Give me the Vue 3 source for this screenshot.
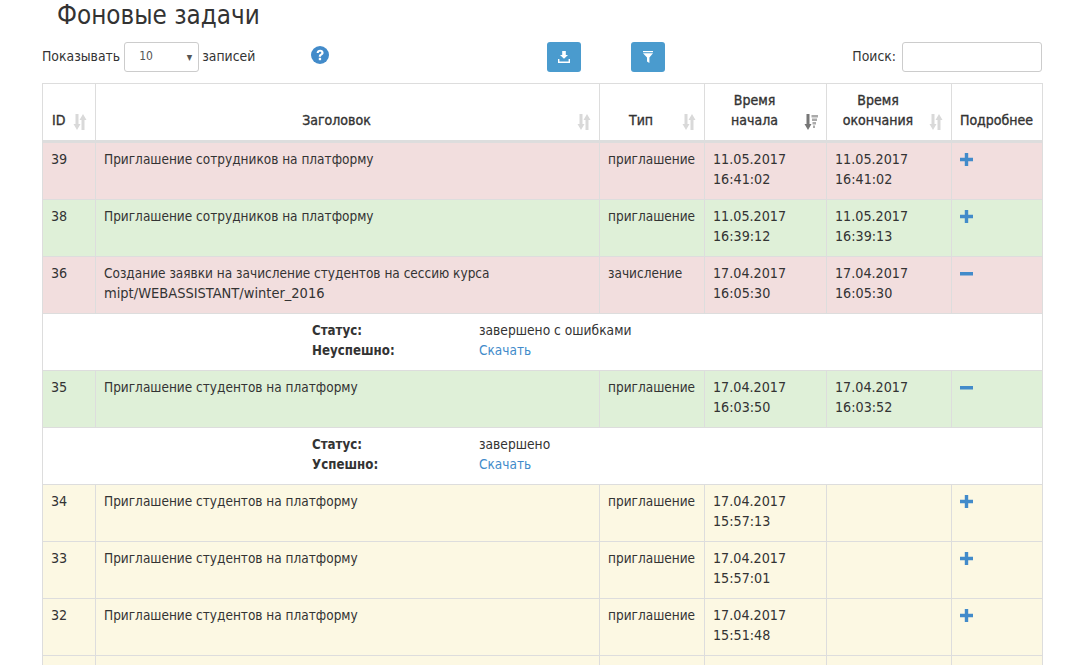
<template>
  <div class="page">
    <h1 class="page-title">Фоновые задачи</h1>

    <div class="toolbar">
      <div class="length-wrap">
        <span class="tool-text">Показывать</span>
        <div class="length-select">
          <span class="tool-text">10</span>
          <span class="caret">▾</span>
        </div>
        <span class="tool-text">записей</span>
      </div>
      <svg class="help-icon" viewBox="0 0 18 18" width="18" height="18">
        <circle cx="9" cy="9" r="9" fill="#428bca" />
        <path d="M5.600 6.900C5.800 4.900 7.200 3.800 9.200 3.800c2 0 3.400 1.200 3.400 2.900 0 1.300-.7 2-1.600 2.600-.8.500-1 .8-1 1.500H7.800c0-1.300.3-2 1.300-2.700.7-.5 1.200-.8 1.200-1.400 0-.6-.5-1-1.200-1-.8 0-1.200.4-1.400 1.200z" fill="#fff" />
        <rect x="7.800" y="11.800" width="2.300" height="2.400" fill="#fff" />
      </svg>
      <button class="tool-btn btn-download">
        <svg viewBox="0 0 12 12" width="12" height="12">
          <path d="M4.200 0h3.600v4H10L6 7.800 2 4h2.200z" fill="#fff" />
          <path d="M0 8h1.400v2.400h9.200V8H12v4H0z" fill="#fff" />
        </svg>
      </button>
      <button class="tool-btn btn-filter">
        <svg viewBox="0 0 12 12" width="12" height="12">
          <rect x="1" y="0" width="10" height="1.200" fill="#fff" />
          <path d="M1 2.200h10L7.400 6.400V12L5 10.600V6.400z" fill="#fff" />
        </svg>
      </button>
      <label class="search">
        <span class="tool-text">Поиск:</span>
        <span class="search-input"></span>
      </label>
    </div>

    <table class="task-table">
      <colgroup>
        <col v-for="w in colWidths" :key="w" :style="{ width: w + 'px' }" />
      </colgroup>
      <thead>
        <tr>
          <th v-for="col in columns" :key="col.title" :class="{ center: col.center, sortable: col.sort }">
            <span class="th-text">
              <template v-for="(line, i) in col.title.split('|')" :key="line">
                <br v-if="i" />{{ line }}
              </template>
            </span>
            <svg v-if="col.sort === 'both'" class="sort-icon" viewBox="0 0 14 16" width="14" height="16">
              <path d="M2.500 0h3v10h2L4 16 .5 10h2z" fill="#d9d9d9" />
              <path d="M8.500 16h3V6h2L10 0 6.500 6h2z" fill="#d9d9d9" />
            </svg>
            <svg v-else-if="col.sort === 'desc'" class="sort-icon" viewBox="0 0 14 16" width="14" height="16">
              <path d="M2.500 0h3v10h2L4 16 .5 10h2z" fill="#777" />
              <path d="M7.500 1h6.500v2.500H7.500zM8 4.500h5v2.500H8zM8.500 8h3.500v2.500H8.500zM9 11.500h2V14H9z" fill="#aaa" />
            </svg>
          </th>
        </tr>
      </thead>
      <tbody>
        <template v-for="task in tasks" :key="task.id">
          <tr :class="task.status">
            <td class="num">{{ task.id }}</td>
            <td>{{ task.title }}<template v-if="task.path"><br /><span class="path">{{ task.path }}</span></template></td>
            <td>{{ task.type }}</td>
            <td class="num">{{ task.startDate }}<br />{{ task.startTime }}</td>
            <td class="num"><template v-if="task.endDate">{{ task.endDate }}<br />{{ task.endTime }}</template></td>
            <td>
              <svg class="toggle" viewBox="0 0 13 13" width="13" height="13">
                <path v-if="task.detail" d="M0 5h13v3.500H0z" fill="#428bca" />
                <path v-else d="M4.800 0h3.400v4.800H13v3.400H8.200V13H4.800V8.200H0V4.800h4.800z" fill="#428bca" />
              </svg>
            </td>
          </tr>
          <tr v-if="task.detail" class="detail-row">
            <td colspan="6">
              <div class="detail-grid">
                <b>Статус:</b>
                <span class="detail-value">{{ task.detail.state }}</span>
                <b>{{ task.detail.label }}</b>
                <a href="#">Скачать</a>
              </div>
            </td>
          </tr>
        </template>
        <!-- next row starts right at the bottom of the frame -->
        <tr class="pending filler">
          <td v-for="n in 6" :key="n"></td>
        </tr>
      </tbody>
    </table>
  </div>
</template>

<script setup>
const colWidths = [53, 504, 105, 122, 125, 91];

const columns = [
  { title: "ID", sort: "both" },
  { title: "Заголовок", center: true, sort: "both" },
  { title: "Тип", center: true, sort: "both" },
  { title: "Время|начала", center: true, sort: "desc" },
  { title: "Время|окончания", center: true, sort: "both" },
  { title: "Подробнее", center: true },
];

const inviteStudents = "Приглашение студентов на платформу";
const inviteStaff = "Приглашение сотрудников на платформу";

const tasks = [
  { id: 39, status: "failed", title: inviteStaff, type: "приглашение", startDate: "11.05.2017", startTime: "16:41:02", endDate: "11.05.2017", endTime: "16:41:02" },
  { id: 38, status: "done", title: inviteStaff, type: "приглашение", startDate: "11.05.2017", startTime: "16:39:12", endDate: "11.05.2017", endTime: "16:39:13" },
  {
    id: 36,
    status: "failed",
    title: "Создание заявки на зачисление студентов на сессию курса",
    path: "mipt/WEBASSISTANT/winter_2016",
    type: "зачисление",
    startDate: "17.04.2017",
    startTime: "16:05:30",
    endDate: "17.04.2017",
    endTime: "16:05:30",
    detail: { state: "завершено с ошибками", label: "Неуспешно:" },
  },
  {
    id: 35,
    status: "done",
    title: inviteStudents,
    type: "приглашение",
    startDate: "17.04.2017",
    startTime: "16:03:50",
    endDate: "17.04.2017",
    endTime: "16:03:52",
    detail: { state: "завершено", label: "Успешно:" },
  },
  { id: 34, status: "pending", title: inviteStudents, type: "приглашение", startDate: "17.04.2017", startTime: "15:57:13" },
  { id: 33, status: "pending", title: inviteStudents, type: "приглашение", startDate: "17.04.2017", startTime: "15:57:01" },
  { id: 32, status: "pending", title: inviteStudents, type: "приглашение", startDate: "17.04.2017", startTime: "15:51:48" },
];
</script>

<style>
html,
body {
  height: 665px;
  margin: 0;
  overflow: hidden;
  background: #fff;
}
</style>

<style scoped>
.page {
  padding: 0 33px 0 42px;
  font-family: "DejaVu Sans Condensed", "DejaVu Sans", sans-serif;
  font-stretch: condensed;
  font-size: 13.5px;
  line-height: 20px;
  color: #333;
}

.page-title {
  margin: 0 0 10px 15px;
  height: 32px;
  font-size: 25.8px;
  line-height: 30px;
  font-weight: 400;
}

.toolbar {
  display: flex;
  align-items: center;
  height: 30px;
  margin-bottom: 11px;
  font-size: 13.85px;
}

.tool-text {
  margin-bottom: 2px;
}

.length-wrap {
  display: flex;
  align-items: center;
  gap: 4px;
  width: 269px;
}

.length-select {
  display: flex;
  justify-content: space-between;
  align-items: center;
  box-sizing: border-box;
  width: 75px;
  height: 30px;
  margin-right: -1px;
  padding: 0 6px 0 14px;
  border: 1px solid #ccc;
  border-radius: 3px;
  font-size: 12px;
  color: #555;
}

.caret {
  font-size: 12px;
}

.help-icon {
  margin-top: -4px;
}

.tool-btn {
  display: flex;
  align-items: center;
  justify-content: center;
  width: 34px;
  height: 30px;
  padding: 0;
  border: 0;
  border-radius: 3px;
  background: #4a9bce;
}

.btn-download {
  margin-left: 218px;
}

.btn-filter {
  margin-left: 50px;
}

.search {
  display: flex;
  align-items: center;
  gap: 6px;
  margin-left: auto;
}

.search-input {
  box-sizing: border-box;
  width: 140px;
  height: 30px;
  border: 1px solid #ccc;
  border-radius: 3px;
}

.task-table {
  box-sizing: border-box;
  width: 1000px;
  table-layout: fixed;
  border-collapse: collapse;
  border: 1px solid #ddd;
}

th,
td {
  padding: 6px 8px 10px;
  border: 1px solid #ddd;
  vertical-align: top;
}

td.num {
  font-size: 14.2px;
}

.path {
  font-size: 14.5px;
}

.filler td {
  height: 56px;
}

th {
  position: relative;
  padding: 6px 8px 10px 9px;
  border-bottom-width: 3px;
  vertical-align: bottom;
  text-align: left;
  font-size: 14px;
  font-weight: 400;
  -webkit-text-stroke: 0.35px #333;
}

th.center {
  padding-left: 7px;
  text-align: center;
}

th.sortable {
  padding-right: 20px;
}

th.center.sortable {
  padding-right: 30px;
  padding-left: 8px;
}

.sort-icon {
  position: absolute;
  right: 8px;
  bottom: 10px;
}

.toggle {
  display: block;
  margin-top: 4px;
}

.failed td {
  background: #f2dede;
}

.done td {
  background: #dff0d8;
}

.pending td {
  background: #fcf8e3;
}

.detail-row td {
  background: #fff;
}

.detail-grid {
  display: grid;
  grid-template-columns: 167px 1fr;
  grid-auto-rows: 20px;
  padding-left: 261px;
}

.detail-grid b {
  font-size: 13.2px;
  line-height: 21px;
  font-weight: 700;
}

.detail-value {
  font-size: 13.7px;
}

.detail-grid a {
  color: #428bca;
  text-decoration: none;
}
</style>
